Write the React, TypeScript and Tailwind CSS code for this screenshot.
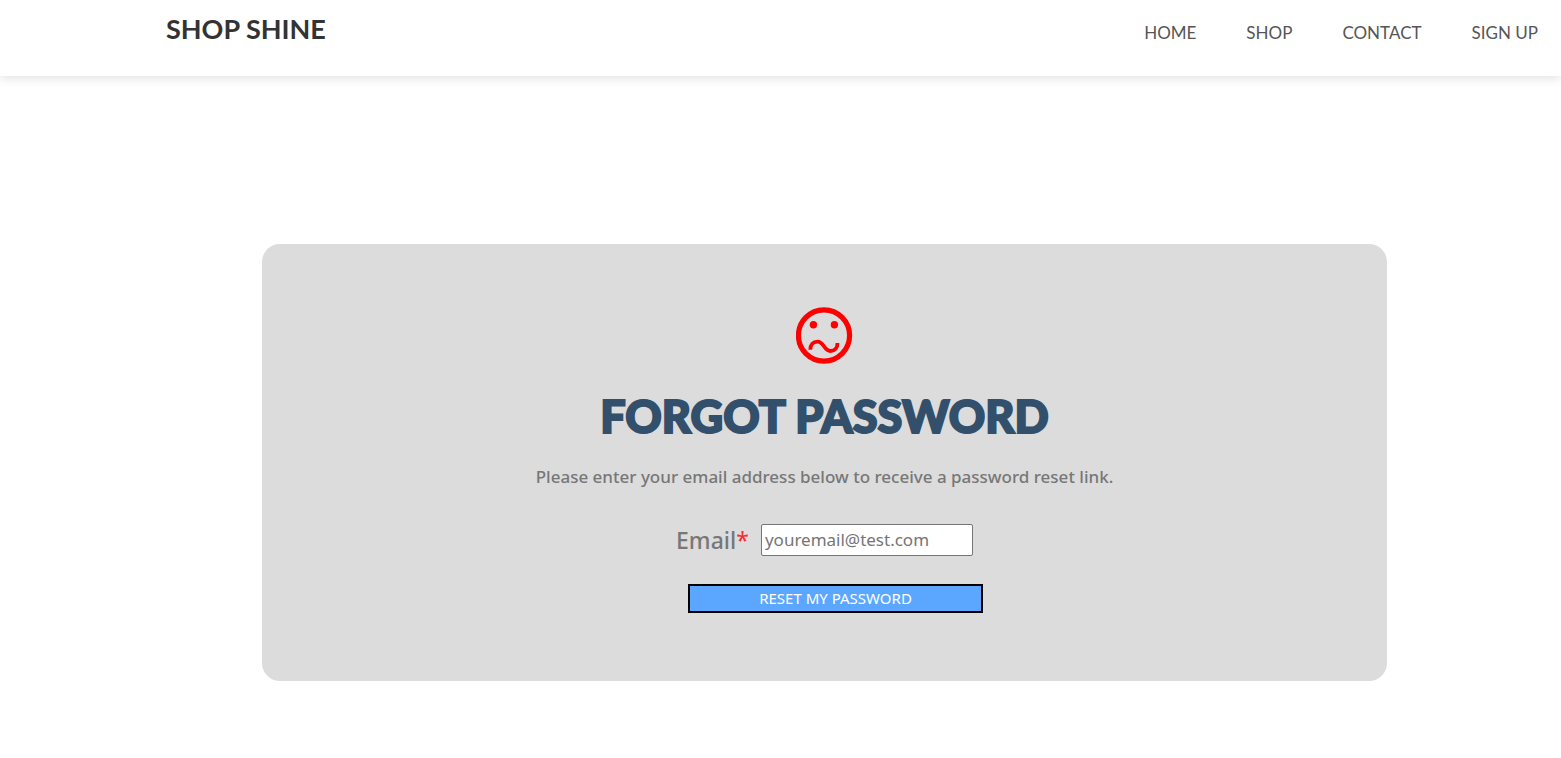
const links = ["HOME", "SHOP", "CONTACT", "SIGN UP"];

function ConfusedFace() {
  return (
    <svg viewBox="0 0 57 57" className="size-[57px]" fill="none" stroke="#ff0000" aria-hidden="true">
      <circle cx="28" cy="28.5" r="25.6" strokeWidth="5.2" />
      <circle cx="17.4" cy="17.7" r="3.7" fill="#ff0000" stroke="none" />
      <circle cx="38.4" cy="17.7" r="3.7" fill="#ff0000" stroke="none" />
      <path d="M14.3 42.8C14.3 37.8 17.2 34.6 21.4 34.6C28.6 34.6 27.4 44 34.6 44C38.8 44 41.5 41 41.5 36" strokeWidth="3.8" />
    </svg>
  );
}

export default function App() {
  return (
    <div className="min-h-screen bg-white font-['Noto_Sans',sans-serif]">
      <header className="flex h-[76px] items-start justify-between pr-[23px] pl-[166px] pt-[11px] shadow-[0_2px_10px_rgba(0,0,0,0.12)]">
        <a href="#" className="font-['Lato',sans-serif] text-[27px] leading-9 font-bold text-[#333333]">
          SHOP SHINE
        </a>
        <nav className="flex gap-[50px] pt-[10px] font-['Lato',sans-serif] text-[17px] leading-6 text-[#555555]">
          {links.map((label) => (
            <a key={label} href="#">
              {label}
            </a>
          ))}
        </nav>
      </header>

      <main className="pt-[168px] pr-[174px] pl-[262px]">
        <form
          className="flex flex-col items-center rounded-[18px] bg-[#dcdcdc] pt-[63px] pb-[68px]"
          onSubmit={(event) => event.preventDefault()}
        >
          <ConfusedFace />
          <h1 className="mt-6 font-['Lato',sans-serif] text-[45px] leading-[56px] font-black text-[#324f6b] [-webkit-text-stroke:2px_#324f6b]">
            FORGOT PASSWORD
          </h1>
          <p className="mt-[21px] text-[17px] leading-6 font-medium text-[#777777]">
            Please enter your email address below to receive a password reset link.
          </p>
          <div className="mt-[35px] flex items-center gap-3">
            <label htmlFor="email" className="text-[23px] leading-8 font-medium text-[#777777]">
              Email<span className="font-normal text-[#ff2a36]">*</span>
            </label>
            <input
              id="email"
              type="email"
              placeholder="youremail@test.com"
              className="h-8 w-[212px] rounded-[2px] border border-[#767676] bg-white px-[3px] pb-[2px] text-[17px] placeholder:text-[#757575]"
            />
          </div>
          <button
            type="submit"
            className="mt-7 ml-[22px] h-[29px] w-[295px] border-2 border-black bg-[#5ba7ff] pb-[2px] text-[15px] leading-[22px] text-white"
          >
            RESET MY PASSWORD
          </button>
        </form>
      </main>
    </div>
  );
}
